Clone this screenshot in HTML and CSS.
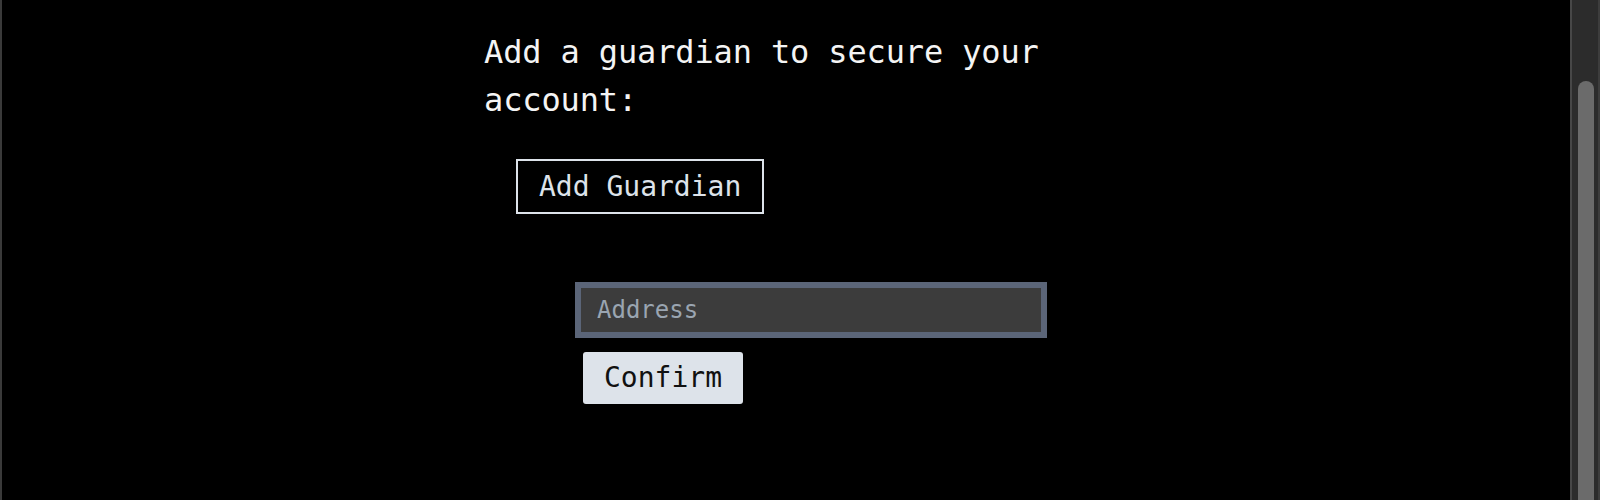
FILE: index.html
```html
<!DOCTYPE html>
<html lang="en">
<head>
<meta charset="utf-8">
<title>Add Guardian</title>
<link rel="stylesheet" href="styles.css">
</head>
<body>
<div class="frame">
  <div class="edge"></div>
  <main class="main">
    <div class="container">
      <h2 class="title">Add a guardian to secure your account:</h2>
      <button class="btn-outline" type="button">Add Guardian</button>
      <form class="guardian-form">
        <input class="address" type="text" placeholder="Address">
        <button class="btn-confirm" type="button">Confirm</button>
      </form>
    </div>
  </main>
  <div class="scrollbar"><div class="thumb"></div></div>
</div>
</body>
</html>
```

FILE: styles.css
```css
html, body {
  margin: 0;
  padding: 0;
  background: #000;
}
body {
  font-family: "DejaVu Sans Mono", "Liberation Mono", monospace;
  color: #fff;
  overflow: hidden;
}
.frame {
  display: flex;
  height: 500px;
  width: 1600px;
}
.edge {
  width: 2px;
  background: #3a3a3a;
  flex: none;
}
.main {
  flex: 1;
  background: #000;
}
.container {
  width: 604px;
  margin: 0 auto;
  padding-top: 28px;
  display: flex;
  flex-direction: column;
  align-items: flex-start;
}
.title {
  margin: 0;
  font-size: 32px;
  line-height: 48px;
  font-weight: normal;
  letter-spacing: -0.14px;
  color: #f4f4f4;
}
.btn-outline {
  margin: 35px 0 0 32px;
  font-family: "DejaVu Sans Mono", "Liberation Mono", monospace;
  font-size: 28px;
  line-height: 33px;
  padding: 9px 21px;
  background: #000;
  color: #dde3ea;
  border: 2px solid #dde3ea;
  border-radius: 0;
}
.guardian-form {
  margin: 68px 0 0 91px;
  display: flex;
  flex-direction: column;
  align-items: flex-start;
}
.address {
  box-sizing: border-box;
  width: 472px;
  height: 56px;
  border: 6px solid #5b6578;
  background: #3c3c3c;
  padding: 0 16px;
  font-family: "DejaVu Sans Mono", "Liberation Mono", monospace;
  font-size: 24px;
  color: #fff;
  outline: none;
  margin: 0;
}
.address::placeholder {
  color: #9aa5b1;
}
.btn-confirm {
  margin: 14px 0 0 8px;
  font-family: "DejaVu Sans Mono", "Liberation Mono", monospace;
  font-size: 28px;
  line-height: 34px;
  padding: 9px 21px;
  background: #dde3ea;
  color: #111;
  border: none;
  border-radius: 3px;
}
.scrollbar {
  box-sizing: border-box;
  width: 30px;
  flex: none;
  background: #2c2c2c;
  border-left: 2px solid #474747;
  border-right: 2px solid #3d3d3d;
  padding: 81px 4px 0 6px;
  display: flex;
}
.thumb {
  flex: 1;
  background: #6b6b6b;
  border-radius: 8px 8px 0 0;
}
```
